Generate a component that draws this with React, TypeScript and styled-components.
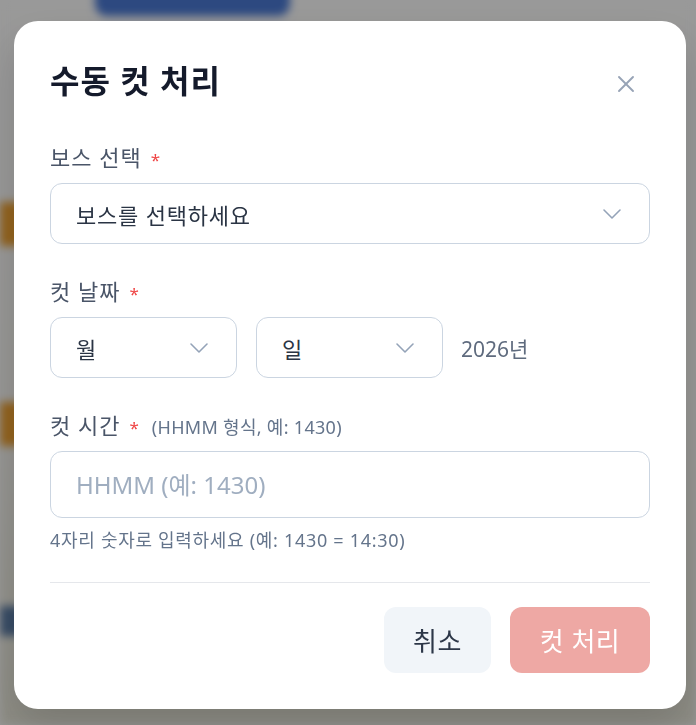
import React from "react";
import styled, { createGlobalStyle } from "styled-components";
import { ChevronDown, X } from "lucide-react";

const GlobalStyle = createGlobalStyle`
  html, body {
    margin: 0;
    padding: 0;
    width: 696px;
    height: 725px;
    overflow: hidden;
    font-family: "Noto Sans", "Noto Sans CJK KR", sans-serif;
  }
  * {
    box-sizing: border-box;
  }
`;

/* blurred page behind the dialog */
const Page = styled.div`
  width: 696px;
  height: 725px;
  background: linear-gradient(180deg, #ffffff 0%, #fbfaf6 55%, #ecebdd 100%);
  filter: blur(4px);
  display: flex;
  flex-direction: column;
`;

const TopButton = styled.div`
  margin: -30px 0 0 95px;
  width: 195px;
  height: 46px;
  border-radius: 12px;
  background: #4b7ad6;
`;

const PageRow = styled.div<{ $accent: string; $top: number; $height: number }>`
  margin-top: ${({ $top }) => $top}px;
  height: ${({ $height }) => $height}px;
  width: 40px;
  background: ${({ $accent }) => $accent};
`;

const Overlay = styled.div`
  position: fixed;
  inset: 0;
  background: rgba(0, 0, 0, 0.4);
  display: flex;
  align-items: flex-start;
  padding: 21px 0 0 14px;
`;

const Dialog = styled.div`
  width: 672px;
  height: 688px;
  background: #ffffff;
  border-radius: 24px;
  padding: 40px 36px 36px;
  display: flex;
  flex-direction: column;
  box-shadow: 0 20px 40px rgba(0, 0, 0, 0.15);
`;

const Header = styled.div`
  height: 40px;
  display: flex;
  align-items: center;
  justify-content: space-between;
  margin-bottom: 43px;
`;

const Title = styled.h2`
  margin: 0;
  font-size: 32px;
  font-weight: 700;
  letter-spacing: 1px;
  color: #141a2b;
  line-height: 40px;
`;

const CloseButton = styled.button`
  width: 32px;
  height: 32px;
  margin: 6px 8px 0 0;
  border: none;
  background: transparent;
  padding: 0;
  display: flex;
  align-items: center;
  justify-content: center;
  color: #97a3b6;
  cursor: pointer;
`;

const Field = styled.div<{ $gap?: number }>`
  display: flex;
  flex-direction: column;
  margin-bottom: ${({ $gap }) => $gap ?? 34}px;
`;

const Label = styled.label`
  display: flex;
  align-items: baseline;
  height: 26px;
  line-height: 26px;
  margin-bottom: 13px;
  font-size: 22px;
  letter-spacing: 1px;
  color: #4a5568;
`;

const Required = styled.span`
  color: #ef4444;
  font-size: 17px;
  margin-left: 9px;
`;

const Hint = styled.span`
  margin-left: 12px;
  font-size: 18px;
  letter-spacing: 0.3px;
  color: #64748b;
`;

const SelectBox = styled.div<{ $width?: number }>`
  width: ${({ $width }) => ($width ? `${$width}px` : "100%")};
  height: 61px;
  border: 1px solid #cbd5e1;
  border-radius: 12px;
  padding: 0 21px 0 25px;
  display: flex;
  align-items: center;
  justify-content: space-between;
  font-size: 22px;
  letter-spacing: 0.8px;
  color: #2a3444;
  background: #ffffff;

  svg {
    color: #94a3b8;
    flex-shrink: 0;
  }
`;

const DateRow = styled.div`
  display: flex;
  align-items: center;
  gap: 19px;
`;

const YearText = styled.span`
  font-size: 21px;
  color: #5f6b7e;
  margin-left: -1px;
`;

const TimeInput = styled.input`
  width: 100%;
  height: 67px;
  border: 1px solid #cbd5e1;
  border-radius: 12px;
  padding: 0 25px;
  font-family: inherit;
  font-size: 24px;
  color: #2a3444;
  outline: none;

  &::placeholder {
    color: #a0aec0;
  }
`;

const HelpText = styled.p`
  margin: 10px 0 0;
  line-height: 24px;
  font-size: 18px;
  letter-spacing: 0.7px;
  color: #64748b;
`;

const Footer = styled.div`
  margin-top: 30px;
  padding-top: 24px;
  border-top: 1px solid #e5e7eb;
  display: flex;
  justify-content: flex-end;
  gap: 19px;
`;

const Button = styled.button<{ $primary?: boolean }>`
  width: ${({ $primary }) => ($primary ? 140 : 107)}px;
  height: 66px;
  padding: 0;
  border: none;
  border-radius: 12px;
  font-family: inherit;
  font-size: 26px;
  letter-spacing: 0.5px;
  background: ${({ $primary }) => ($primary ? "#eea8a4" : "#f1f5f9")};
  color: ${({ $primary }) => ($primary ? "#ffffff" : "#2d3748")};
  cursor: ${({ $primary }) => ($primary ? "not-allowed" : "pointer")};
`;

const App: React.FC = () => {
  return (
    <>
      <GlobalStyle />
      <Page>
        <TopButton />
        <PageRow $accent="#f2a433" $top={186} $height={44} />
        <PageRow $accent="#f2a433" $top={156} $height={44} />
        <PageRow $accent="#5d7ea8" $top={160} $height={30} />
      </Page>
      <Overlay>
        <Dialog>
          <Header>
            <Title>수동 컷 처리</Title>
            <CloseButton aria-label="닫기">
              <X size={28} strokeWidth={1.6} />
            </CloseButton>
          </Header>

          <Field>
            <Label>
              보스 선택<Required>*</Required>
            </Label>
            <SelectBox>
              <span>보스를 선택하세요</span>
              <ChevronDown size={32} strokeWidth={1.2} />
            </SelectBox>
          </Field>

          <Field>
            <Label>
              컷 날짜<Required>*</Required>
            </Label>
            <DateRow>
              <SelectBox $width={187}>
                <span>월</span>
                <ChevronDown size={32} strokeWidth={1.2} />
              </SelectBox>
              <SelectBox $width={187}>
                <span>일</span>
                <ChevronDown size={32} strokeWidth={1.2} />
              </SelectBox>
              <YearText>2026년</YearText>
            </DateRow>
          </Field>

          <Field $gap={0}>
            <Label>
              컷 시간<Required>*</Required>
              <Hint>(HHMM 형식, 예: 1430)</Hint>
            </Label>
            <TimeInput placeholder="HHMM (예: 1430)" maxLength={4} />
            <HelpText>4자리 숫자로 입력하세요 (예: 1430 = 14:30)</HelpText>
          </Field>

          <Footer>
            <Button>취소</Button>
            <Button $primary>컷 처리</Button>
          </Footer>
        </Dialog>
      </Overlay>
    </>
  );
};

export default App;
